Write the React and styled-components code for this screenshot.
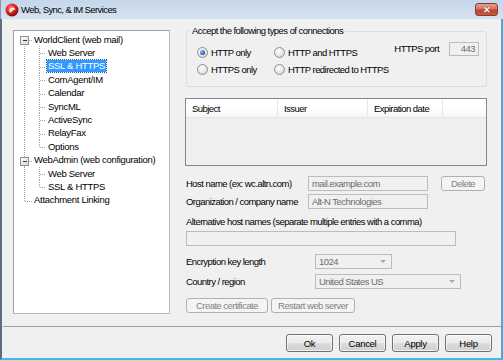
import React from 'react';
import styled, { createGlobalStyle } from 'styled-components';

const UI = `"Liberation Sans", Arial, sans-serif`;

const GlobalStyle = createGlobalStyle`
  html, body { margin: 0; padding: 0; background: #f0f0f0; }
  body { font-family: ${UI}; color: #000; }
  * { box-sizing: border-box; }
`;

const Window = styled.div`
  width: 503px;
  height: 360px;
  display: flex;
  flex-direction: column;
  overflow: hidden;
  white-space: nowrap;
`;

const TitleBar = styled.div`
  height: 19px;
  display: flex;
  align-items: center;
  padding: 0 4px;
  background: linear-gradient(#c5d6ea, #d5e2f1);
  border-left: 1px solid #8797ab;
`;

const TitleText = styled.span`
  margin-left: 2px;
  font-size: 9.5px;
  letter-spacing: -0.6px;
  color: #000;
`;

const CloseBtn = styled.div`
  margin-left: auto;
  margin-right: 1px;
  width: 23px;
  height: 13px;
  border: 1px solid #8a3a32;
  border-radius: 3px;
  background: linear-gradient(#e6a191 0%, #d4715f 45%, #c0402e 55%, #c75a42 100%);
  display: flex;
  align-items: center;
  justify-content: center;
  color: #fff;
  font: bold 9px "Liberation Sans", sans-serif;
  text-shadow: 0 0 1px #5a1a12;
`;

const Body = styled.div`
  flex: 1;
  display: flex;
  flex-direction: column;
  background: #f0f0f0;
  border-left: 2px solid #5e6c80;
  border-right: 2px solid #49a8e0;
  border-bottom: 2px solid #3cbbea;
`;

const Main = styled.div`
  display: flex;
  padding: 11px 0 0 11px;
`;

const TreeBox = styled.div`
  flex-shrink: 0;
  width: 157px;
  height: 284px;
  border: 1px solid #a0a0a0;
  border-right-color: #b9b9b9;
  border-bottom-color: #b9b9b9;
  background: #fff;
  padding-top: 2px;
  font-size: 9.5px;
  letter-spacing: -0.3px;
`;

const Node = styled.div`
  height: 13.4px;
  display: flex;
  align-items: center;
`;

const NodeLabel = styled.span`
  padding: 0 1px;
  line-height: 12px;
  color: ${p => (p.$selected ? '#fff' : '#000')};
  background: ${p => (p.$selected ? '#3399ff' : 'transparent')};
  outline: ${p => (p.$selected ? '1px dotted #1a5ea8' : 'none')};
`;

const Right = styled.div`
  display: flex;
  flex-direction: column;
  margin-left: 16px;
  margin-top: -5px;
  width: 301px;
  font-size: 9.5px;
  letter-spacing: -0.55px;
`;

const Group = styled.fieldset`
  margin: 0;
  height: 62px;
  width: 301px;
  border: 1px solid #d5dfe5;
  border-radius: 3px;
  padding: 7px 7px 0 10px;
  display: flex;
  align-items: flex-start;
`;

const Legend = styled.legend`
  padding: 0 2px;
  margin-left: -7px;
  line-height: 12px;
`;

const RadioGrid = styled.div`
  display: grid;
  grid-template-columns: 77px auto;
  grid-auto-rows: 17px;
`;

const RadioItem = styled.label`
  display: flex;
  align-items: center;
  gap: 3px;
`;

const RadioDot = styled.span`
  width: 11px;
  height: 11px;
  border-radius: 50%;
  border: 1px solid #8e8f8f;
  background: radial-gradient(circle at 40% 35%, #ffffff 0%, #e6e6e6 55%, #c9c9c9 100%);
  display: flex;
  align-items: center;
  justify-content: center;
  &::after {
    content: '';
    width: 5px;
    height: 5px;
    border-radius: 50%;
    background: ${p => (p.$on ? 'radial-gradient(circle at 35% 35%, #8fc2f2, #1d5aa6 70%)' : 'transparent')};
  }
`;

const PortBox = styled.div`
  margin-left: auto;
  display: flex;
  align-items: center;
  gap: 10px;
  height: 17px;
  margin-top: -4px;
`;

const TextBox = styled.div`
  width: ${p => p.$w}px;
  height: ${p => p.$h || 15}px;
  border: 1px solid #b9bcc0;
  background: #f0f0f0;
  color: #6d6d6d;
  padding: 0 3px;
  display: flex;
  align-items: center;
  justify-content: ${p => (p.$right ? 'flex-end' : 'flex-start')};
  line-height: 12px;
`;

const List = styled.div`
  margin-top: 11px;
  margin-left: -1px;
  width: 302px;
  height: 68px;
  border: 1px solid #828790;
  background: #f0f0f0;
`;

const ListHead = styled.div`
  display: flex;
  height: 19px;
  background: linear-gradient(#ffffff 0%, #ffffff 50%, #f5f6f7 100%);
  border-bottom: 1px solid #e2e3e4;
`;

const Col = styled.div`
  width: ${p => p.$w}px;
  padding-left: 6px;
  display: flex;
  align-items: center;
  border-right: 1px solid #e3e8ee;
`;

const Row = styled.div`
  display: flex;
  align-items: center;
  margin-top: ${p => p.$mt}px;
  height: ${p => p.$h || 15}px;
`;

const Label = styled.span`
  width: ${p => p.$w || 'auto'};
  flex-shrink: 0;
`;

const DisabledBtn = styled.div`
  width: ${p => p.$w}px;
  height: ${p => p.$h || 15}px;
  margin-left: ${p => p.$ml || 0}px;
  border: 1px solid #adb2b5;
  border-radius: 3px;
  background: #f4f4f4;
  color: #838383;
  display: flex;
  align-items: center;
  justify-content: center;
`;

const Combo = styled.div`
  width: ${p => p.$w}px;
  height: 15px;
  border: 1px solid #b9bcc0;
  background: #f0f0f0;
  color: #6d6d6d;
  padding: 0 3px;
  display: flex;
  align-items: center;
  &::after {
    content: '';
    margin-left: auto;
    margin-right: 2px;
    border-left: 3px solid transparent;
    border-right: 3px solid transparent;
    border-top: 3px solid #a8a8a8;
  }
`;

const Separator = styled.div`
  margin-top: 12px;
  margin-left: 1px;
  height: 1px;
  background: #a0a0a0;
`;

const Footer = styled.div`
  display: flex;
  justify-content: flex-end;
  gap: 6px;
  padding: 7px 9px 0 0;
  font-size: 9.5px;
  letter-spacing: -0.3px;
`;

const Button = styled.div`
  width: 47px;
  height: 18px;
  border: 1px solid #707070;
  border-radius: 3px;
  background: linear-gradient(#f2f2f2 0%, #ebebeb 50%, #dddddd 50%, #cfcfcf 100%);
  box-shadow: inset 0 0 0 1px rgba(255, 255, 255, 0.7);
  display: flex;
  align-items: center;
  justify-content: center;
  color: #000;
`;

const H = 13.4;

function Guides({ level, exp, first, last, lastChild }) {
  const c = H / 2;
  const m = Math.round(c) + 0.5;
  const w = level ? 33 : 19;
  const line = { stroke: '#a5a5a5', strokeWidth: 1, strokeDasharray: '1 1', shapeRendering: 'crispEdges' };
  return (
    <svg width={w} height={H} style={{ flexShrink: 0, display: 'block' }}>
      <line x1={10.5} x2={10.5} y1={first ? c : 0} y2={last ? c : H} {...line} />
      {level === 0 && <line x1={11} x2={18} y1={m} y2={m} {...line} />}
      {level === 1 && (
        <>
          <line x1={25.5} x2={25.5} y1={0} y2={lastChild ? c : H} {...line} />
          <line x1={26} x2={32} y1={m} y2={m} {...line} />
        </>
      )}
      {exp && (
        <>
          <defs>
            <linearGradient id="expg" x1="0" y1="0" x2="1" y2="1">
              <stop offset="0" stopColor="#ffffff" />
              <stop offset="1" stopColor="#d4d4d4" />
            </linearGradient>
          </defs>
          <rect x={6.5} y={m - 4} width={8} height={8} fill="url(#expg)" stroke="#919191" shapeRendering="crispEdges" />
          <line x1={8.5} x2={12.5} y1={m} y2={m} stroke="#1f3a6e" shapeRendering="crispEdges" />
        </>
      )}
    </svg>
  );
}

const tree = [
  { label: 'WorldClient (web mail)', level: 0, exp: true, first: true },
  { label: 'Web Server', level: 1 },
  { label: 'SSL & HTTPS', level: 1, selected: true },
  { label: 'ComAgent/IM', level: 1 },
  { label: 'Calendar', level: 1 },
  { label: 'SyncML', level: 1 },
  { label: 'ActiveSync', level: 1 },
  { label: 'RelayFax', level: 1 },
  { label: 'Options', level: 1, lastChild: true },
  { label: 'WebAdmin (web configuration)', level: 0, exp: true },
  { label: 'Web Server', level: 1 },
  { label: 'SSL & HTTPS', level: 1, lastChild: true },
  { label: 'Attachment Linking', level: 0, last: true },
];

function AppIcon() {
  return (
    <svg width="14" height="14" viewBox="0 0 14 14">
      <defs>
        <radialGradient id="ball" cx="0.4" cy="0.35" r="0.65">
          <stop offset="0" stopColor="#ff8a7a" />
          <stop offset="0.55" stopColor="#d8251b" />
          <stop offset="1" stopColor="#7a0c08" />
        </radialGradient>
      </defs>
      <circle cx="7" cy="7" r="6.5" fill="url(#ball)" />
      <path d="M4.5 8.5 C5 5 8.5 4.5 9.5 6 C8 6.5 6 7 5.5 9.5" fill="none" stroke="#fff" strokeWidth="1.1" />
    </svg>
  );
}

export default function App() {
  return (
    <Window>
      <GlobalStyle />
      <TitleBar>
        <AppIcon />
        <TitleText>Web, Sync, &amp; IM Services</TitleText>
        <CloseBtn>✕</CloseBtn>
      </TitleBar>
      <Body>
        <Main>
          <TreeBox>
            {tree.map((n, i) => (
              <Node key={i}>
                <Guides {...n} />
                <NodeLabel $selected={n.selected}>{n.label}</NodeLabel>
              </Node>
            ))}
          </TreeBox>
          <Right>
            <Group>
              <Legend>Accept the following types of connections</Legend>
              <RadioGrid>
                <RadioItem><RadioDot $on />HTTP only</RadioItem>
                <RadioItem><RadioDot />HTTP and HTTPS</RadioItem>
                <RadioItem><RadioDot />HTTPS only</RadioItem>
                <RadioItem><RadioDot />HTTP redirected to HTTPS</RadioItem>
              </RadioGrid>
              <PortBox>
                <span>HTTPS port</span>
                <TextBox $w={30} $h={14} $right>443</TextBox>
              </PortBox>
            </Group>
            <List>
              <ListHead>
                <Col $w={92}>Subject</Col>
                <Col $w={90}>Issuer</Col>
                <Col $w={75}>Expiration date</Col>
              </ListHead>
            </List>
            <Row $mt={10}>
              <Label $w="122px">Host name (ex: wc.altn.com)</Label>
              <TextBox $w={120}>mail.example.com</TextBox>
              <DisabledBtn $w={44} $ml={13}>Delete</DisabledBtn>
            </Row>
            <Row $mt={3}>
              <Label $w="122px">Organization / company name</Label>
              <TextBox $w={120}>Alt-N Technologies</TextBox>
            </Row>
            <Row $mt={6} $h={13}>
              <Label>Alternative host names (separate multiple entries with a comma)</Label>
            </Row>
            <Row $mt={3}>
              <TextBox $w={270} />
            </Row>
            <Row $mt={8}>
              <Label $w="129px">Encryption key length</Label>
              <Combo $w={77}>1024</Combo>
            </Row>
            <Row $mt={5}>
              <Label $w="129px">Country / region</Label>
              <Combo $w={146}>United States US</Combo>
            </Row>
            <Row $mt={9}>
              <DisabledBtn $w={82}>Create certificate</DisabledBtn>
              <DisabledBtn $w={84} $ml={3}>Restart web server</DisabledBtn>
            </Row>
          </Right>
        </Main>
        <Separator />
        <Footer>
          <Button>Ok</Button>
          <Button>Cancel</Button>
          <Button>Apply</Button>
          <Button>Help</Button>
        </Footer>
      </Body>
    </Window>
  );
}
